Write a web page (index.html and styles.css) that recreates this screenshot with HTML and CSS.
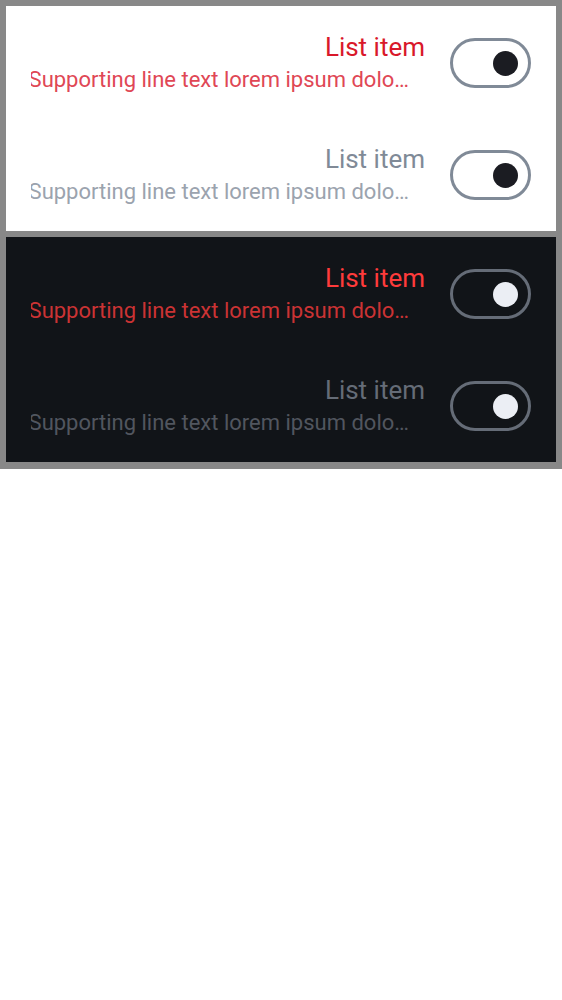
FILE: index.html
```html
<!DOCTYPE html>
<html lang="en">
<head>
<meta charset="utf-8">
<meta name="viewport" content="width=device-width, initial-scale=1">
<title>List items</title>
<link rel="stylesheet" href="styles.css">
</head>
<body>
<main class="board">
  <section class="panel light" dir="rtl">
    <label class="row error">
      <input class="switch" type="checkbox" role="switch">
      <span class="text">
        <span class="title">List item</span>
        <span class="support"><bdi dir="ltr">Supporting line text lorem ipsum dolo…</bdi></span>
      </span>
    </label>
    <label class="row muted">
      <input class="switch" type="checkbox" role="switch">
      <span class="text">
        <span class="title">List item</span>
        <span class="support"><bdi dir="ltr">Supporting line text lorem ipsum dolo…</bdi></span>
      </span>
    </label>
  </section>
  <section class="panel dark" dir="rtl">
    <label class="row error">
      <input class="switch" type="checkbox" role="switch">
      <span class="text">
        <span class="title">List item</span>
        <span class="support"><bdi dir="ltr">Supporting line text lorem ipsum dolo…</bdi></span>
      </span>
    </label>
    <label class="row muted">
      <input class="switch" type="checkbox" role="switch">
      <span class="text">
        <span class="title">List item</span>
        <span class="support"><bdi dir="ltr">Supporting line text lorem ipsum dolo…</bdi></span>
      </span>
    </label>
  </section>
</main>
</body>
</html>
```
FILE: styles.css
```css
* {
  box-sizing: border-box;
}

body {
  margin: 0;
  background: #fff;
  font-family: Roboto, sans-serif;
}

.board {
  display: grid;
  grid-template-columns: minmax(0, 1fr);
  gap: 6px;
  padding: 6px 6px 7px;
  background: #888;
}

.panel {
  display: grid;
  grid-template-columns: minmax(0, 1fr);
  grid-auto-rows: 1fr;
  min-height: 225px;
  padding-top: 1px;
  background: var(--surface);
}

.light {
  --surface: #fff;
  --outline: #808a97;
  --thumb: #1b1c22;
  --error-title: #d9182a;
  --error-support: #e04755;
  --muted-title: #808a97;
  --muted-support: #9ba3ae;
}

.dark {
  --surface: #111418;
  --outline: #656c77;
  --thumb: #ebeef4;
  --error-title: #ff3b3b;
  --error-support: #cb3334;
  --muted-title: #656c77;
  --muted-support: #51565f;
}

.row {
  display: flex;
  align-items: center;
  gap: 25px;
  padding: 0 25px;
}

.text {
  display: flex;
  flex: 1;
  flex-direction: column;
  min-width: 0;
  padding-bottom: 2px;
}

.title {
  font-size: 26px;
  line-height: 36px;
}

.support {
  overflow: hidden;
  padding-right: 16px;
  font-size: 22px;
  line-height: 30px;
  white-space: nowrap;
}

.error .title {
  color: var(--error-title);
}

.error .support {
  color: var(--error-support);
}

.muted .title {
  color: var(--muted-title);
}

.muted .support {
  color: var(--muted-support);
}

.switch {
  display: flex;
  flex: none;
  align-items: center;
  width: 81px;
  height: 50px;
  margin: 0;
  padding: 0 10px;
  border: 3px solid var(--outline);
  border-radius: 25px;
  appearance: none;
}

.switch::before {
  width: 25px;
  height: 25px;
  border-radius: 50%;
  background: var(--thumb);
  content: "";
}

.switch:checked {
  justify-content: flex-end;
}
```
